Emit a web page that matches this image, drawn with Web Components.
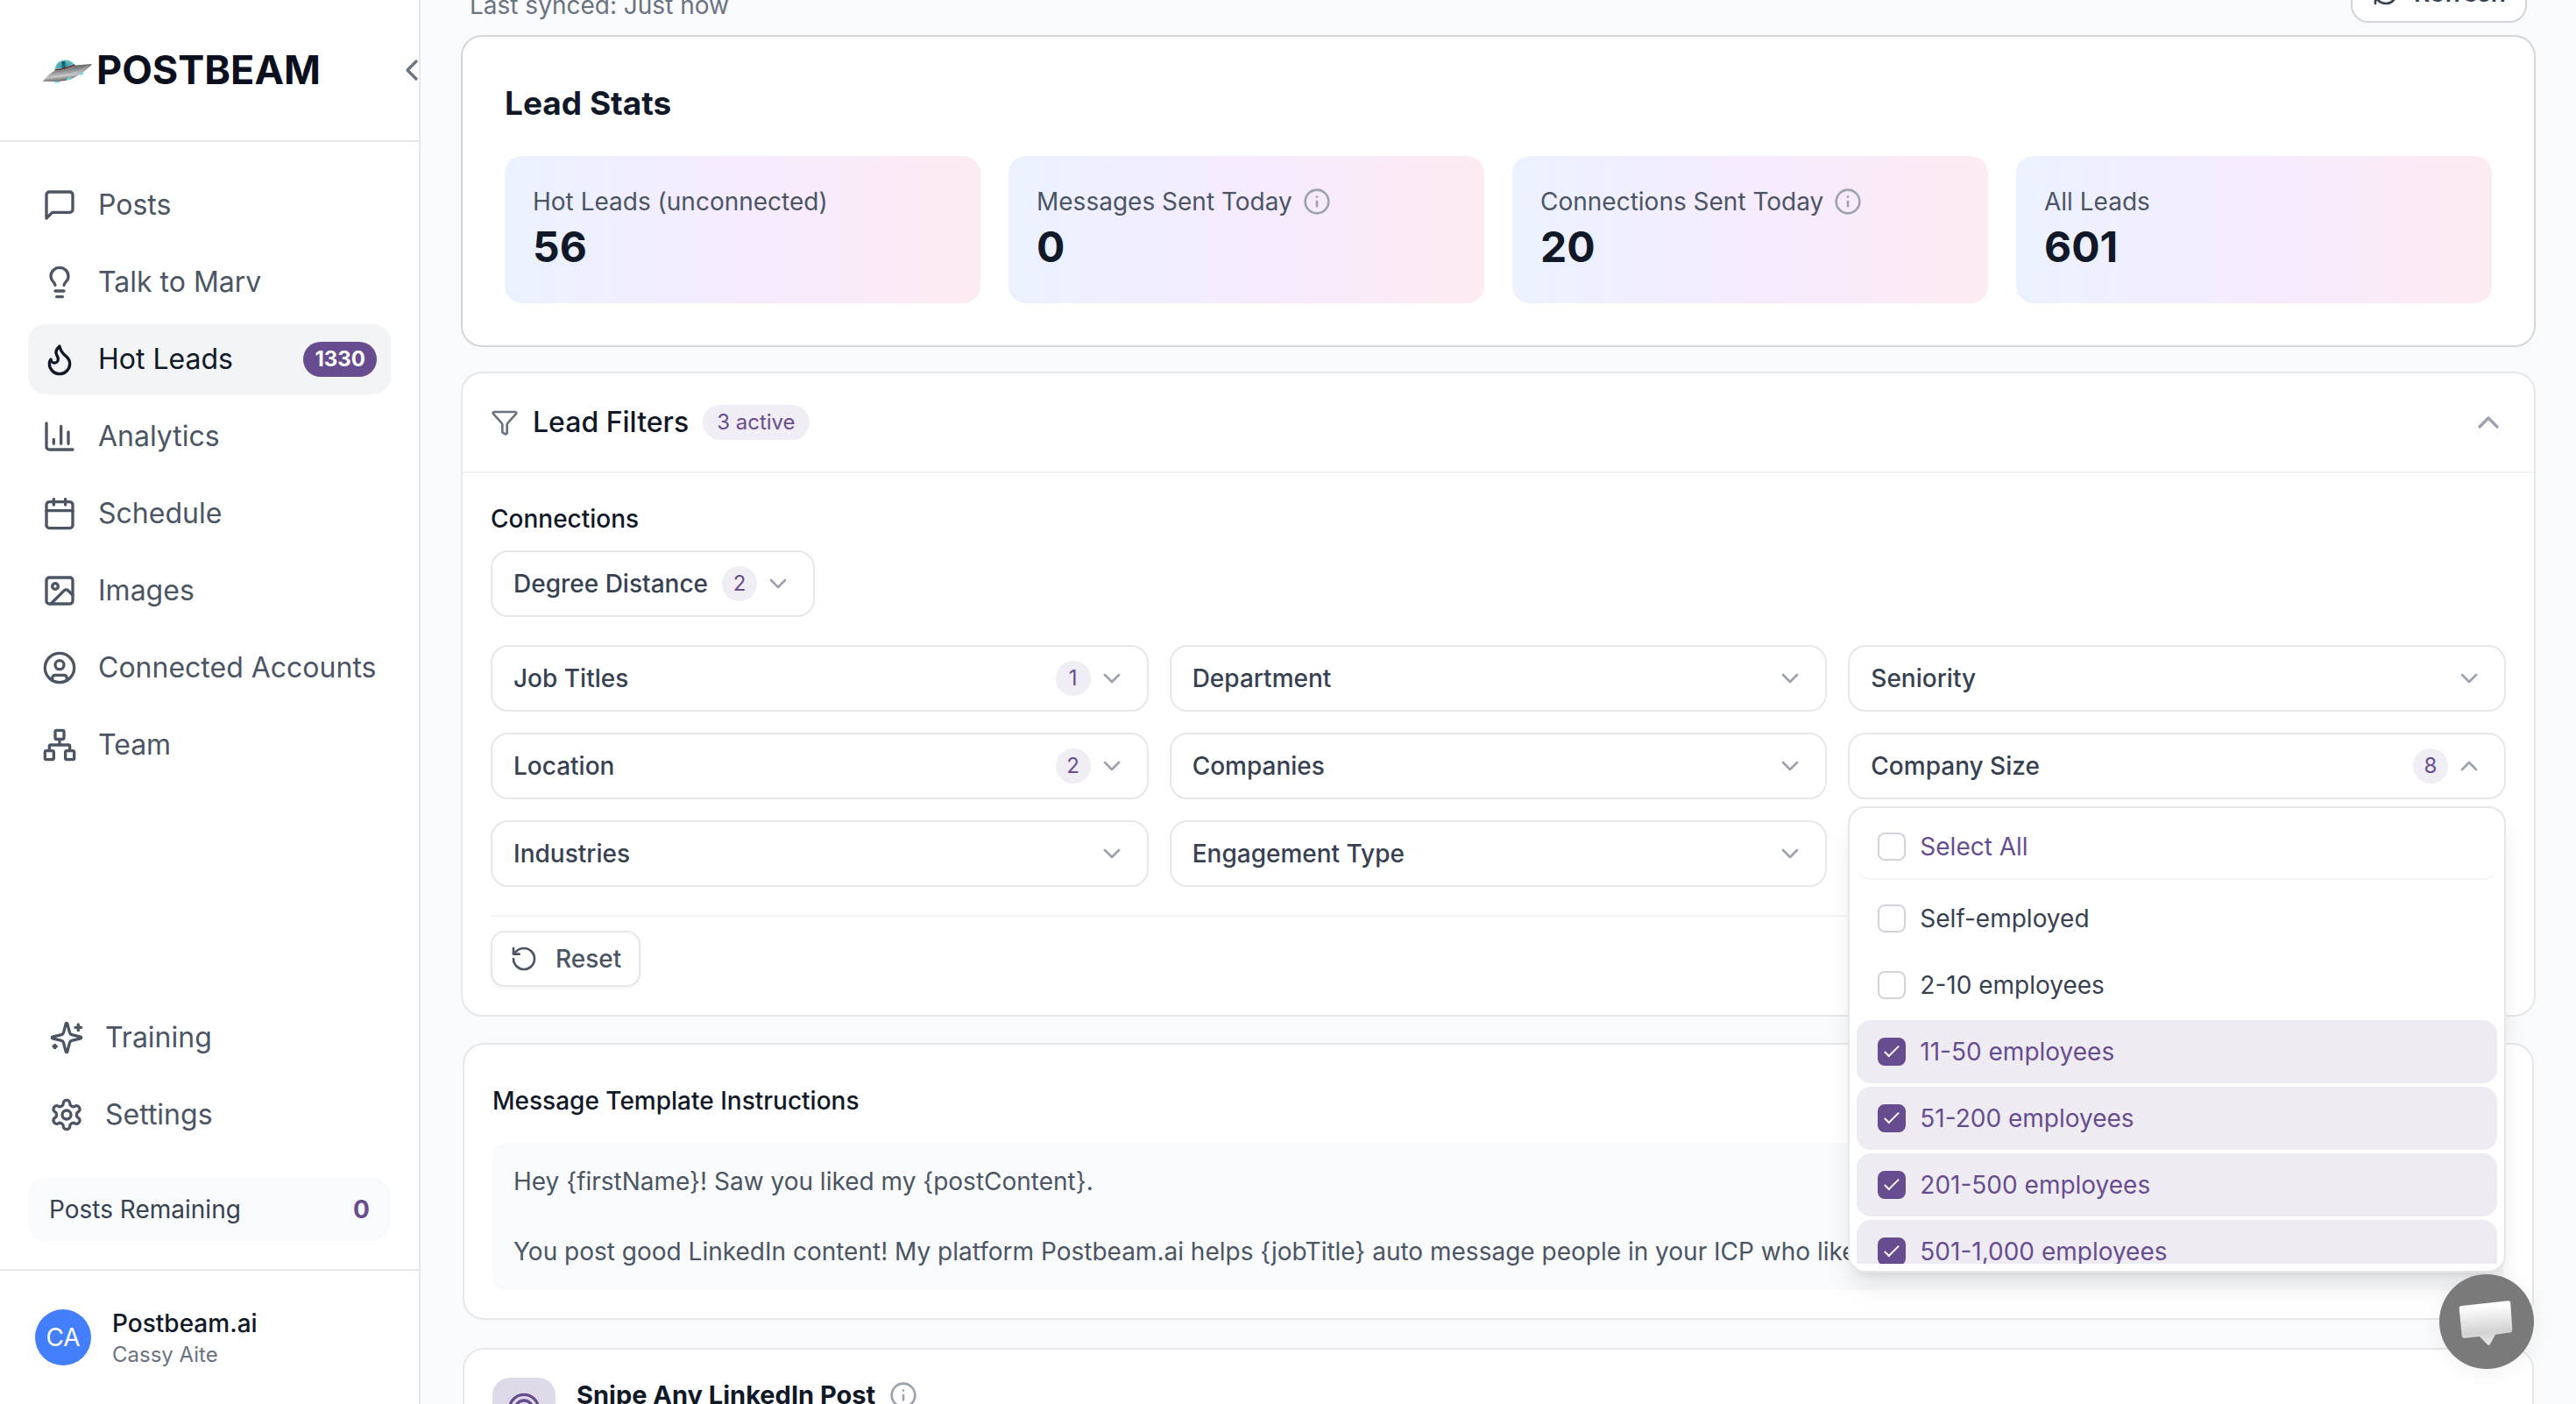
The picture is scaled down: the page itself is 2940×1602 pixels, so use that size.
<!DOCTYPE html>
<html lang="en">
<head>
<meta charset="utf-8">
<title>Postbeam – Hot Leads</title>
<style>
  html, body { height: 100%; }
  body {
    margin: 0; overflow: hidden;
    font-family: Inter, "Liberation Sans", sans-serif;
    font-size: 28px; line-height: 40px; color: #111827;
    background: #f9fafc;
    --purple: #674d8f; --tint: #f0edf4; --line: #e5e7eb; --hair: #f3f4f6;
  }
</style>
</head>
<body>
<pb-app></pb-app>
<script>
const ICONS = {
  posts: '<path d="M21 15a2 2 0 0 1-2 2H7l-4 4V5a2 2 0 0 1 2-2h14a2 2 0 0 1 2 2z"/>',
  bulb: '<path d="M15 14c.2-1 .7-1.700 1.500-2.500 1-.9 1.500-2.200 1.500-3.500A6 6 0 0 0 6 8c0 1 .2 2.200 1.500 3.500.7.700 1.300 1.500 1.500 2.500M9 18h6M10 22h4"/>',
  flame: '<path d="M8.500 14.500A2.500 2.500 0 0 0 11 12c0-1.380-.5-2-1-3-1.072-2.143-.224-4.054 2-6 .5 2.500 2 4.900 4 6.500 2 1.600 3 3.500 3 5.500a7 7 0 1 1-14 0c0-1.153.433-2.294 1-3a2.500 2.500 0 0 0 2.500 2.500z"/>',
  chart: '<path d="M3 3v16a2 2 0 0 0 2 2h16M18 17V9M13 17V5M8 17v-3"/>',
  calendar: '<path d="M8 2v4M16 2v4M3 10h18"/><rect x="3" y="4" width="18" height="18" rx="2"/>',
  image: '<rect x="3" y="3" width="18" height="18" rx="2"/><circle cx="9" cy="9" r="2"/><path d="m21 15-3.086-3.086a2 2 0 0 0-2.828 0L6 21"/>',
  user: '<circle cx="12" cy="12" r="10"/><circle cx="12" cy="10" r="3"/><path d="M7 20.662V19a2 2 0 0 1 2-2h6a2 2 0 0 1 2 2v1.662"/>',
  team: '<rect x="16" y="16" width="6" height="6" rx="1"/><rect x="2" y="16" width="6" height="6" rx="1"/><rect x="9" y="2" width="6" height="6" rx="1"/><path d="M5 16v-3a1 1 0 0 1 1-1h12a1 1 0 0 1 1 1v3M12 12V8"/>',
  sparkles: '<path d="M9.937 15.500A2 2 0 0 0 8.500 14.063l-6.135-1.582a.5.5 0 0 1 0-.962L8.500 9.936A2 2 0 0 0 9.937 8.500l1.582-6.135a.5.5 0 0 1 .963 0L14.063 8.500A2 2 0 0 0 15.500 9.937l6.135 1.581a.5.5 0 0 1 0 .964L15.500 14.063a2 2 0 0 0-1.437 1.437l-1.582 6.135a.5.5 0 0 1-.963 0zM20 3v4M22 5h-4M4 17v2M5 18H3"/>',
  gear: '<path d="M12.220 2h-.44a2 2 0 0 0-2 2v.18a2 2 0 0 1-1 1.730l-.43.25a2 2 0 0 1-2 0l-.15-.08a2 2 0 0 0-2.730.73l-.22.38a2 2 0 0 0 .73 2.730l.15.1a2 2 0 0 1 1 1.720v.51a2 2 0 0 1-1 1.740l-.15.09a2 2 0 0 0-.73 2.730l.22.38a2 2 0 0 0 2.730.73l.15-.08a2 2 0 0 1 2 0l.43.25a2 2 0 0 1 1 1.730V20a2 2 0 0 0 2 2h.44a2 2 0 0 0 2-2v-.18a2 2 0 0 1 1-1.730l.43-.25a2 2 0 0 1 2 0l.15.08a2 2 0 0 0 2.730-.73l.22-.39a2 2 0 0 0-.73-2.730l-.15-.08a2 2 0 0 1-1-1.740v-.5a2 2 0 0 1 1-1.740l.15-.09a2 2 0 0 0 .73-2.730l-.22-.38a2 2 0 0 0-2.730-.73l-.15.08a2 2 0 0 1-2 0l-.43-.25a2 2 0 0 1-1-1.730V4a2 2 0 0 0-2-2z"/><circle cx="12" cy="12" r="3"/>',
  left: '<path d="m15 18-6-6 6-6"/>',
  up: '<path d="m18 15-6-6-6 6"/>',
  down: '<path d="m6 9 6 6 6-6"/>',
  info: '<circle cx="12" cy="12" r="10"/><path d="M12 16v-4M12 8h.01"/>',
  funnel: '<path d="M10 20a1 1 0 0 0 .553.895l2 1A1 1 0 0 0 14 21v-7a2 2 0 0 1 .517-1.341L21.740 4.670A1 1 0 0 0 21 3H3a1 1 0 0 0-.742 1.670l7.225 7.989A2 2 0 0 1 10 14z"/>',
  refresh: '<path d="M3 12a9 9 0 0 1 9-9 9.750 9.750 0 0 1 6.740 2.740L21 8M21 3v5h-5M21 12a9 9 0 0 1-9 9 9.750 9.750 0 0 1-6.740-2.740L3 16M8 16H3v5"/>',
  reset: '<path d="M3 12a9 9 0 1 0 9-9 9.750 9.750 0 0 0-6.740 2.740L3 8M3 3v5h5"/>',
  target: '<circle cx="12" cy="12" r="10"/><circle cx="12" cy="12" r="6"/><circle cx="12" cy="12" r="2"/>'
};

const BASE = `<style>
  *, *::before { box-sizing: border-box; }
  :host { display: block; }
  h2, h3, p { margin: 0; font: inherit; }
  a { color: inherit; text-decoration: none; }
  button { font: inherit; color: inherit; margin: 0; padding: 0; border: 0; background: none; text-align: left; cursor: pointer; }
</style>`;

function define(name, render) {
  customElements.define(name, class extends HTMLElement {
    connectedCallback() {
      if (this.shadowRoot) return;
      this.attachShadow({ mode: 'open' }).innerHTML = BASE + render(this);
    }
  });
}

define('pb-icon', el => `
  <style>
    :host { flex: none; width: var(--size, 32px); height: var(--size, 32px); }
    svg { display: block; width: 100%; height: 100%; fill: none; stroke: currentColor;
      stroke-width: 2; stroke-linecap: round; stroke-linejoin: round; }
  </style>
  <svg viewBox="0 0 24 24" aria-hidden="true">${ICONS[el.getAttribute('name')]}</svg>`);

define('pb-logo', () => `
  <style>
    :host { flex: 1; }
    a { display: flex; align-items: center; gap: 2px; font-size: 45px; line-height: 64px; font-weight: 700; color: #0c0f1d; }
    svg { flex: none; width: 60px; height: 40px; }
  </style>
  <a href="#home">
    <svg viewBox="0 0 60 40" aria-hidden="true">
      <defs>
        <linearGradient id="hull" x1=".3" y1="0" x2=".6" y2="1"><stop offset="0" stop-color="#4b4b4d"/><stop offset=".4" stop-color="#8d8e90"/><stop offset=".65" stop-color="#c4c5c6"/><stop offset="1" stop-color="#4a4848"/></linearGradient>
        <radialGradient id="dome" cx=".5" cy=".6" r=".6"><stop offset="0" stop-color="#3a9ca3"/><stop offset=".7" stop-color="#58b9bd"/><stop offset="1" stop-color="#8ccdd0"/></radialGradient>
      </defs>
      <ellipse cx="17" cy="33" rx="3" ry="1.500" fill="#5fe3e4"/>
      <path d="M17 32c8 2 22-3 33-13l-6 1z" fill="#5d2426"/>
      <path d="M14.500 20C15 12 21 8 27 8.200c5 .2 9 3 10.500 6.800z" fill="url(#dome)"/>
      <circle cx="24.500" cy="12" r="2.300" fill="#175a64"/><path d="M22 14h5l1 4h-5z" fill="#206f78"/>
      <path d="M14.500 20c7-.5 15-2.500 23-6" fill="none" stroke="#6e2b2c" stroke-width="1.400"/>
      <path d="M1 33C6 26 11 22 16 20c8 0 15-2 22-5.500 6-.5 12-1 18-1.500 1 0 1 1 0 1.500C48 22 40 28 28 31 18 33.500 9 33 1 33z" fill="url(#hull)"/>
      <path d="M10 27c14 1 30-3 43-12" fill="none" stroke="#d6d7d8" stroke-width="1" opacity=".5"/>
      <ellipse cx="31" cy="30" rx="2.600" ry="1.500" fill="#5fe3e4"/>
      <ellipse cx="45" cy="24" rx="2.300" ry="1.500" fill="#5fe3e4" transform="rotate(-30 45 24)"/>
    </svg><span>POSTBEAM</span></a>`);

define('pb-nav-item', el => `
  <style>
    a { display: flex; align-items: center; gap: 24px; height: 80px; padding: 0 16px; border-radius: 20px;
      font-size: 32px; line-height: 48px; color: #4b5563; --size: 40px; }
    :host([inset]) a { padding: 0 24px; }
    :host([current]) a { background: #f3f4f6; color: #111827; }
    span { flex: 1; white-space: nowrap; }
    b { padding: 0 13px; border-radius: 20px; background: var(--purple); color: #fff; font-size: 24px; line-height: 40px; }
  </style>
  <a href="#"><pb-icon name="${el.getAttribute('icon')}"></pb-icon><span><slot></slot></span>${
    el.hasAttribute('count') ? `<b>${el.getAttribute('count')}</b>` : ''}</a>`);

define('pb-sidebar', () => `
  <style>
    :host { flex: none; width: 480px; border-right: 2px solid var(--line); background: #fff; }
    aside { display: flex; flex-direction: column; height: 100%; }
    header { display: flex; align-items: center; height: 162px; padding-left: 48px; border-bottom: 2px solid var(--line); }
    header button { color: #6b7280; margin-right: -12px; --size: 40px; }
    nav { display: flex; flex-direction: column; gap: 8px; padding: 32px 32px 0; }
    nav.tools { margin-top: auto; padding-top: 0; }
    .quota { display: flex; justify-content: space-between; margin: 32px; padding: 16px 24px; border-radius: 20px;
      background: #f9fafc; color: #374151; }
    .quota b { color: var(--purple); }
    footer { display: flex; align-items: center; gap: 24px; padding: 40px; border-top: 2px solid var(--line); }
    .avatar { width: 64px; height: 64px; border-radius: 50%; background: #437efb; color: #fff; line-height: 64px; text-align: center; }
    .name { font-weight: 500; }
    .sub { font-size: 24px; line-height: 32px; color: #6b7280; }
  </style>
  <aside>
    <header><pb-logo></pb-logo><button aria-label="Collapse sidebar"><pb-icon name="left"></pb-icon></button></header>
    <nav>
      <pb-nav-item icon="posts">Posts</pb-nav-item>
      <pb-nav-item icon="bulb">Talk to Marv</pb-nav-item>
      <pb-nav-item icon="flame" current count="1330">Hot Leads</pb-nav-item>
      <pb-nav-item icon="chart">Analytics</pb-nav-item>
      <pb-nav-item icon="calendar">Schedule</pb-nav-item>
      <pb-nav-item icon="image">Images</pb-nav-item>
      <pb-nav-item icon="user">Connected Accounts</pb-nav-item>
      <pb-nav-item icon="team">Team</pb-nav-item>
    </nav>
    <nav class="tools">
      <pb-nav-item icon="sparkles" inset>Training</pb-nav-item>
      <pb-nav-item icon="gear" inset>Settings</pb-nav-item>
    </nav>
    <div class="quota"><span>Posts Remaining</span><b>0</b></div>
    <footer>
      <div class="avatar">CA</div>
      <div><div class="name">Postbeam.ai</div><div class="sub">Cassy Aite</div></div>
    </footer>
  </aside>`);

define('pb-stat', el => `
  <style>
    :host { flex: 1; padding: 32px; border-radius: 20px; background: linear-gradient(90deg, #ebf2ff, #f5ebfe 50%, #fdebf2); }
    .label { display: flex; align-items: center; gap: 12px; color: #4b5563; }
    pb-icon { color: #9ca3af; }
    .value { font-size: 48px; line-height: 64px; font-weight: 700; }
  </style>
  <div class="label"><span>${el.getAttribute('label')}</span>${el.hasAttribute('info') ? '<pb-icon name="info"></pb-icon>' : ''}</div>
  <div class="value"><slot></slot></div>`);

define('pb-count', () => `
  <style>:host { min-width: 40px; border-radius: 20px; background: var(--tint); color: var(--purple);
    font-size: 24px; line-height: 40px; font-weight: 400; text-align: center; }
    :host([wide]) { padding: 0 16px; }</style><slot></slot>`);

define('pb-filter', el => `
  <style>
    :host { position: relative; }
    button { display: flex; align-items: center; width: 100%; padding: 16px 24px; border: 2px solid var(--line);
      border-radius: 20px; background: #fff; color: #374151; font-weight: 500; gap: 8px; }
    span { flex: 1; white-space: nowrap; margin-right: 8px; }
    pb-icon { color: #9ca3af; }
  </style>
  <button aria-haspopup="listbox" aria-expanded="${el.hasAttribute('open')}"><span>${el.getAttribute('label')}</span>${
    el.hasAttribute('count') ? `<pb-count>${el.getAttribute('count')}</pb-count>` : ''
  }<pb-icon name="${el.hasAttribute('open') ? 'up' : 'down'}"></pb-icon></button><slot></slot>`);

define('pb-option', el => `
  <style>
    label { display: flex; align-items: center; gap: 16px; padding: 16px 24px; border-radius: 16px; color: #374151; }
    :host([all]) label { color: var(--purple); border-bottom: 2px solid var(--hair); margin-bottom: 4px; }
    :host([checked]) label { background: #efebf3; color: var(--purple); }
    input { appearance: none; flex: none; width: 32px; height: 32px; margin: 0; border: 2px solid #d1d5db; border-radius: 8px;
      background: #fff; display: grid; place-items: center; }
    input:checked { border-color: var(--purple); background: var(--purple); }
    input:checked::before { content: ""; width: 8px; height: 17px; margin-bottom: 6px; border: solid #fff; border-width: 0 2px 2px 0; transform: rotate(45deg); }
  </style>
  <label><input type="checkbox" ${el.hasAttribute('checked') ? 'checked' : ''}><span><slot></slot></span></label>`);

define('pb-menu', () => `
  <style>
    :host { position: absolute; z-index: 5; top: 100%; left: 0; right: 0; margin-top: 8px; padding: 8px; border: 2px solid var(--line);
      border-radius: 20px; background: #fff; box-shadow: 0 20px 30px -6px rgb(0 0 0 / .1), 0 8px 12px -8px rgb(0 0 0 / .1); }
    .list { display: flex; flex-direction: column; gap: 4px; max-height: 512px; overflow: hidden; }
    ::slotted(*) { flex: none; }
  </style>
  <div class="list"><slot></slot></div>`);

define('pb-card', () => `
  <style>
    :host { background: #fff; border: 2px solid var(--line); border-radius: 24px; }
    :host([ring]) { border: 0; border-radius: 22px; box-shadow: 0 0 0 2px var(--ring, var(--line)); }
  </style><slot></slot>`);

define('pb-stats', () => `
  <style>
    pb-card { --ring: #d4d6d9; padding: 48px; }
    h2 { font-size: 37px; line-height: 56px; font-weight: 700; }
    .row { display: flex; gap: 32px; margin-top: 32px; }
  </style>
  <pb-card ring>
    <h2>Lead Stats</h2>
    <div class="row">
      <pb-stat label="Hot Leads (unconnected)">56</pb-stat>
      <pb-stat label="Messages Sent Today" info>0</pb-stat>
      <pb-stat label="Connections Sent Today" info>20</pb-stat>
      <pb-stat label="All Leads">601</pb-stat>
    </div>
  </pb-card>`);

define('pb-filters', () => `
  <style>
    .head { display: flex; align-items: center; gap: 16px; width: 100%; padding: 32px; border-bottom: 2px solid var(--hair); }
    .head > pb-icon { color: #6b7280; }
    .head .toggle { margin-left: auto; --size: 40px; color: #9ca3af; }
    h2 { font-size: 32px; line-height: 48px; font-weight: 500; }
    .body { padding: 32px; }
    h3 { font-weight: 500; margin-bottom: 16px; }
    .one { display: flex; margin-bottom: 32px; }
    .grid { display: grid; grid-template-columns: repeat(3, minmax(0, 1fr)); gap: 24px; }
    .foot { margin-top: 32px; padding-top: 16px; border-top: 2px solid var(--hair); display: flex; }
    .foot button { display: flex; align-items: center; gap: 20px; padding: 10px 20px; border: 2px solid var(--line); border-radius: 16px;
      background: #fff; color: #4b5563; font-weight: 500; box-shadow: 0 2px 4px rgb(0 0 0 / .06); }
  </style>
  <pb-card ring>
    <div class="head">
      <pb-icon name="funnel"></pb-icon><h2>Lead Filters</h2><pb-count wide>3 active</pb-count>
      <button class="toggle" aria-label="Collapse filters"><pb-icon name="up"></pb-icon></button>
    </div>
    <div class="body">
      <h3>Connections</h3>
      <div class="one"><pb-filter label="Degree Distance" count="2"></pb-filter></div>
      <div class="grid">
        <pb-filter label="Job Titles" count="1"></pb-filter>
        <pb-filter label="Department"></pb-filter>
        <pb-filter label="Seniority"></pb-filter>
        <pb-filter label="Location" count="2"></pb-filter>
        <pb-filter label="Companies"></pb-filter>
        <pb-filter label="Company Size" count="8" open>
          <pb-menu>
            <pb-option all>Select All</pb-option>
            <pb-option>Self-employed</pb-option>
            <pb-option>2-10 employees</pb-option>
            <pb-option checked>11-50 employees</pb-option>
            <pb-option checked>51-200 employees</pb-option>
            <pb-option checked>201-500 employees</pb-option>
            <pb-option checked>501-1,000 employees</pb-option>
          </pb-menu>
        </pb-filter>
        <pb-filter label="Industries"></pb-filter>
        <pb-filter label="Engagement Type"></pb-filter>
      </div>
      <div class="foot"><button><pb-icon name="reset"></pb-icon>Reset</button></div>
    </div>
  </pb-card>`);

define('pb-template', () => `
  <style>
    pb-card { padding: 32px; }
    h2 { line-height: 64px; font-weight: 500; margin-bottom: 16px; }
    .text { padding: 24px; border-radius: 16px; background: #f9fafc; color: #4b5563; white-space: pre-wrap; }
  </style>
  <pb-card>
    <h2>Message Template Instructions</h2>
    <p class="text">Hey {firstName}! Saw you liked my {postContent}.

You post good LinkedIn content! My platform Postbeam.ai helps {jobTitle} auto message people in your ICP who like</p>
  </pb-card>`);

define('pb-snipe', () => `
  <style>
    pb-card { padding: 32px; }
    .row { display: flex; align-items: flex-start; gap: 24px; }
    .tile { padding: 16px; border-radius: 20px; background: #dfdae8; color: var(--purple); --size: 40px; }
    .title { display: flex; align-items: center; gap: 16px; }
    h2 { font-size: 29px; font-weight: 700; }
    .title pb-icon { color: #9ca3af; }
  </style>
  <pb-card>
    <div class="row">
      <div class="tile"><pb-icon name="target"></pb-icon></div>
      <div class="title"><h2>Snipe Any LinkedIn Post</h2><pb-icon name="info"></pb-icon></div>
    </div>
  </pb-card>`);

define('pb-chat', () => `
  <style>
    :host { position: fixed; z-index: 9; right: 48px; bottom: 40px; }
    button { display: block; width: 108px; height: 108px; border-radius: 50%; background: #7a7a7a; box-shadow: 0 4px 24px rgb(0 0 0 / .06); }
    svg { display: block; }
  </style>
  <button aria-label="Open chat">
    <svg viewBox="0 0 108 108" aria-hidden="true">
      <defs><linearGradient id="g" x1="0" y1="0" x2=".08" y2="1"><stop offset=".15" stop-color="#fff"/><stop offset=".75" stop-color="#d2d2d2"/><stop offset="1" stop-color="#e6e6e6"/></linearGradient></defs>
      <path d="M25.500 36 78 30.200q3-.3 3.300 2.700l2 30.300q.2 3-2.800 3.300L64 68.800l-6 11q-1.500 2-3.200.3L46 71l-17 1.800q-3 .3-3.300-2.700L22.700 39.300q-.2-3 2.800-3.300z" fill="url(#g)"/>
    </svg>
  </button>`);

define('pb-app', () => `
  <style>
    :host { display: flex; height: 100vh; }
    main { flex: 1; min-width: 0; display: flex; flex-direction: column; gap: 32px; padding: 0 48px; overflow: hidden; }
    main > * { flex: none; }
    /* the toolbar sits partly above the fold, as the column is scrolled */
    .bar { display: flex; justify-content: space-between; align-items: flex-end; padding: 0 8px; margin: -42px 0 -16px; }
    .bar span { color: #6b7280; }
    .bar button { display: flex; align-items: center; gap: 16px; padding: 12px 22px; border: 2px solid #d1d5db; border-radius: 20px;
      background: #fff; color: #374151; font-weight: 600; }
  </style>
  <pb-sidebar></pb-sidebar>
  <main>
    <div class="bar"><span>Last synced: Just now</span><button><pb-icon name="refresh"></pb-icon>Refresh</button></div>
    <pb-stats></pb-stats>
    <pb-filters></pb-filters>
    <pb-template></pb-template>
    <pb-snipe></pb-snipe>
  </main>
  <pb-chat></pb-chat>`);
</script>
</body>
</html>
